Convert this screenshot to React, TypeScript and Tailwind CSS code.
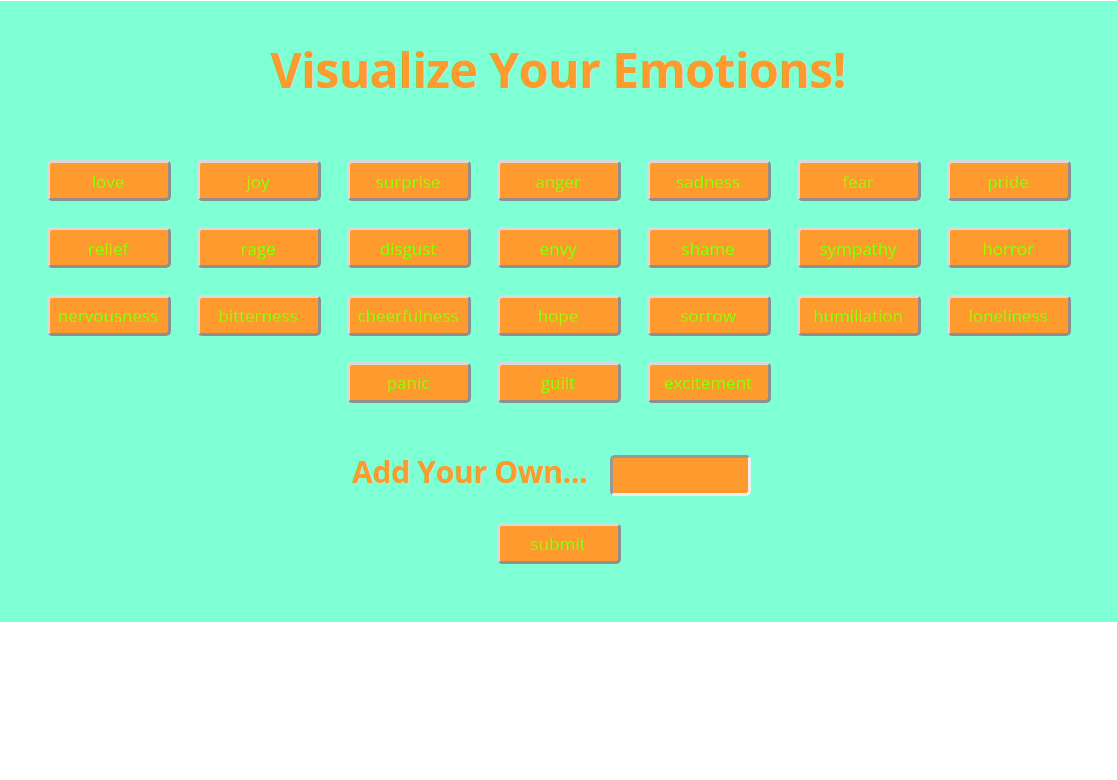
import React, { useState } from 'react';

const emotions = [
  'love', 'joy', 'surprise', 'anger', 'sadness', 'fear', 'pride',
  'relief', 'rage', 'disgust', 'envy', 'shame', 'sympathy', 'horror',
  'nervousness', 'bitterness', 'cheerfulness', 'hope', 'sorrow', 'humiliation', 'loneliness',
  'panic', 'guilt', 'excitement',
];

const btn =
  'w-[124px] h-[41px] bg-[#ff9a2e] text-[#7fff00] text-[17px] pt-px rounded-[5px] border-[3px] border-t-[#d9d9d9] border-l-[#d9d9d9] border-r-[#8f8f8f] border-b-[#8f8f8f] leading-none';

export default function App() {
  const [custom, setCustom] = useState('');

  return (
    <div className="bg-white min-h-screen pt-px" style={{ fontFamily: '"Open Sans", "Noto Sans", sans-serif' }}>
      <div className="bg-[#7fffd4] h-[621px] flex flex-col items-center">
        <h1 className="mt-[37px] text-[48px] font-bold text-[#ff9a2e] leading-[64px] tracking-[-0.5px]">
          Visualize Your Emotions!
        </h1>

        <div className="mt-[58px] w-[1050px] flex flex-wrap justify-center gap-y-[26.3px]">
          {emotions.map((e) => (
            <button key={e} className={`${btn} mx-[13px]`}>
              {e}
            </button>
          ))}
        </div>

        <div className="mt-[49px] mr-[14px] flex items-start gap-[22px]">
          <span className="text-[30px] font-bold text-[#ff9a2e] tracking-[-0.3px] leading-[40px]">Add Your Own...</span>
          <input
            value={custom}
            onChange={(ev) => setCustom(ev.target.value)}
            className="w-[141px] h-[41px] mt-[3px] bg-[#ff9a2e] rounded-[5px] border-[3px] border-t-[#999999] border-l-[#999999] border-r-[#eeeeee] border-b-[#eeeeee] outline-none px-2 text-[#7fff00]"
          />
        </div>

        <button className={`${btn} mt-[27px]`}>submit</button>
      </div>
    </div>
  );
}
